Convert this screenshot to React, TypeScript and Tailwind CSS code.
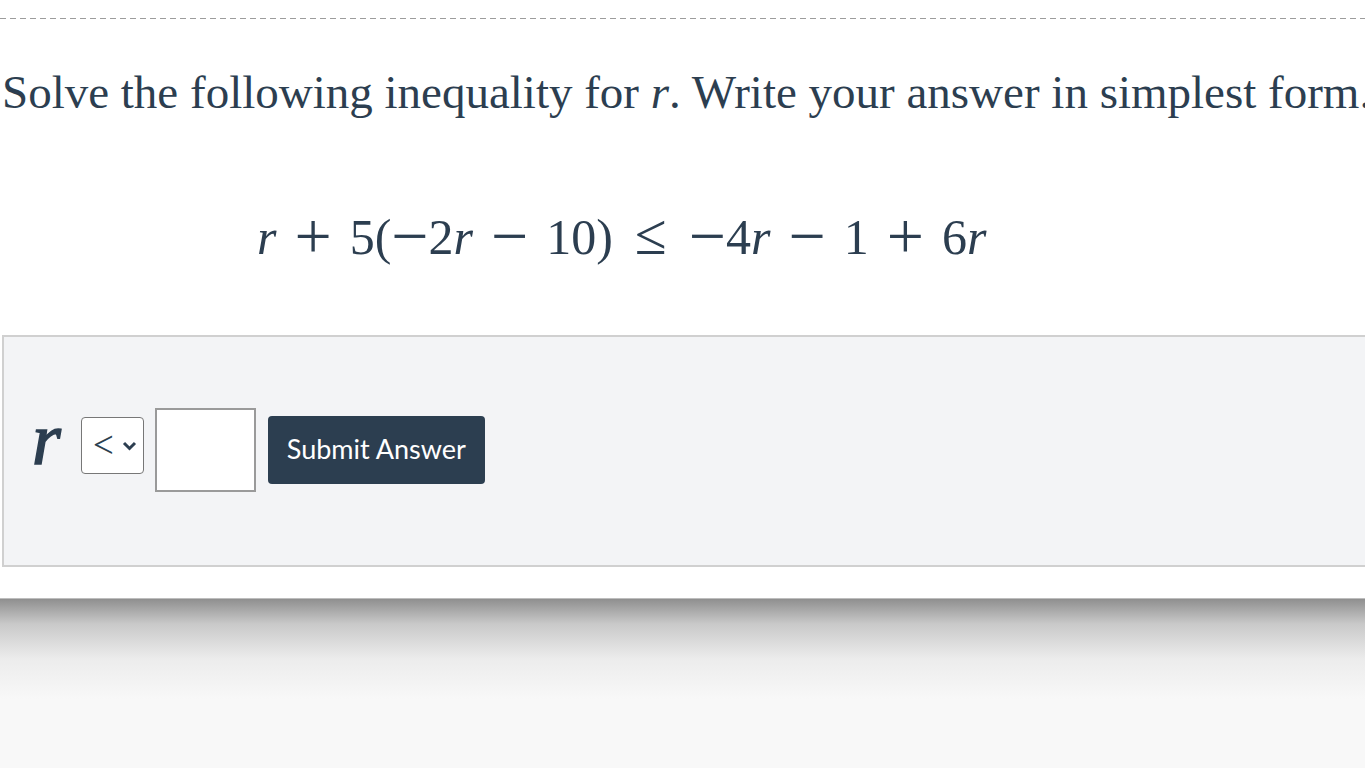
import { useState } from 'react';

const serif = { fontFamily: '"Liberation Serif", "Times New Roman", serif' };
const lato = { fontFamily: 'Lato, "Liberation Sans", sans-serif' };

// binary operator with KaTeX-like medium spaces
function Bin({ children }: { children: React.ReactNode }) {
  return <span className="mx-[18px] text-[66px] leading-none align-[-4px]">{children}</span>;
}

export default function App() {
  const [rel, setRel] = useState('<');
  const [answer, setAnswer] = useState('');

  return (
    <div className="min-h-screen bg-[#f8f8f8] overflow-hidden">
      <div className="bg-white">
        {/* dashed separator */}
        <div className="pt-[18px]">
          <div className="h-px bg-[repeating-linear-gradient(to_right,#9c9c9c_0_6px,transparent_6px_10px)]" />
        </div>

        {/* prompt */}
        <p
          className="mt-[49px] pl-[2px] whitespace-nowrap text-[47px] leading-[48px] text-[#2c3e50]"
          style={serif}
        >
          Solve the following inequality for <i>r</i>. Write your answer in simplest form.
        </p>

        {/* inequality */}
        <div
          className="mt-[87px] pl-[257px] h-[50px] whitespace-nowrap text-[50px] leading-[50px] text-[#2c3e50]"
          style={serif}
        >
          <i>r</i>
          <Bin>+</Bin>5(<span className="text-[66px] leading-none align-[-4px]">−</span>2<i>r</i>
          <Bin>−</Bin>10)
          <span className="mx-[22px] text-[58px] leading-none">≤</span>
          <span className="text-[66px] leading-none align-[-4px]">−</span>4<i>r</i>
          <Bin>−</Bin>1
          <Bin>+</Bin>6<i>r</i>
        </div>

        {/* answer panel */}
        <div className="mt-[82px] ml-[2px] mr-[-4px] h-[232px] border-2 border-[#d0d0d0] bg-[#f3f4f6] flex items-center pl-[28px] pb-[11px]">
          <span
            className="text-[74px] leading-none italic text-[#2c3e50] mr-[20px] -mt-[14px] [-webkit-text-stroke:1.5px_#2c3e50]"
            style={serif}
          >
            r
          </span>
          <div className="relative w-[63px] h-[57px] rounded-[4px] border border-[#777] bg-white flex items-center">
            <span className="ml-[9px] -mt-[6px] text-[46px] font-light leading-none text-[#2c3e50]" style={lato}>
              {rel}
            </span>
            <svg className="absolute right-[6px] top-[23px]" width="15" height="10" viewBox="0 0 15 10">
              <path d="M2 2 L7.5 7.5 L13 2" fill="none" stroke="#2c3e50" strokeWidth="3" />
            </svg>
            <select
              value={rel}
              onChange={(e) => setRel(e.target.value)}
              className="absolute inset-0 opacity-0"
            >
              <option>&lt;</option>
              <option>&gt;</option>
              <option>≤</option>
              <option>≥</option>
            </select>
          </div>
          <input
            value={answer}
            onChange={(e) => setAnswer(e.target.value)}
            className="ml-[11px] mt-[8px] w-[101px] h-[84px] border-2 border-[#9a9a9a] bg-white outline-none"
          />
          <button
            className="ml-[12px] mt-[8px] w-[217px] h-[68px] rounded-[4px] bg-[#2c3e50] text-white text-[27px]"
            style={lato}
          >
            Submit Answer
          </button>
        </div>

        <div className="h-[32px] border-b border-[#bdbdbd]" />
      </div>
      <div className="h-[100px] bg-[linear-gradient(to_bottom,#8f8f8f,#c9c9c9_25%,#ececec_60%,#f8f8f8)]" />
    </div>
  );
}
